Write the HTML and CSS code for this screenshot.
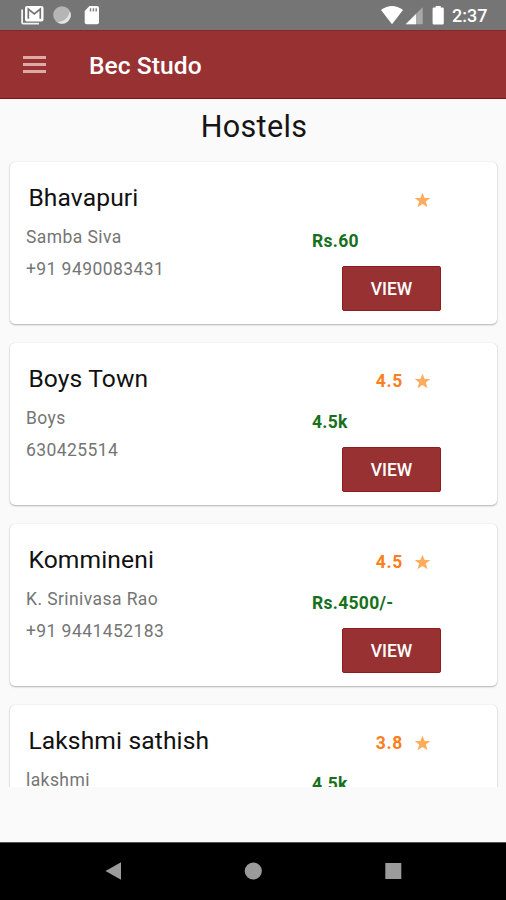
FILE: index.html
```html
<!DOCTYPE html>
<html lang="en">
<head>
<meta charset="utf-8">
<title>Bec Studo</title>
<link rel="stylesheet" href="styles.css">
</head>
<body>
<div class="screen">
  <div class="status">
    <svg class="status-left" width="100" height="30" viewBox="0 0 100 30">
      <path d="M21.2 9.5H23V22.7H39V24.6H23.2Q21.2 24.6 21.2 22.6Z" fill="#f2f2f2"/>
      <rect x="25" y="6" width="18.5" height="15.5" rx="2" fill="#fff"/>
      <path d="M28.3 18.8V9L34.3 13.8L40.3 9V18.8" fill="none" stroke="#747474" stroke-width="1.7"/>
      <circle cx="62" cy="15" r="8.8" fill="#b5b5b5"/>
      <path d="M70 11.5A8.6 8.6 0 0 1 57.5 22.2Q67 22 70 11.5Z" fill="#e4e4e4"/>
      <path d="M89.5 6H97Q99 6 99 8V22.3Q99 24.3 97 24.3H86.7Q84.7 24.3 84.7 22.3V11Z" fill="#fff"/>
      <path d="M90.5 8.2V11.4M93.4 8.2V11.4M96.2 8.2V11.4" stroke="#858585" stroke-width="1.5"/>
    </svg>
    <svg class="status-right" width="70" height="30" viewBox="380 0 70 30">
      <path d="M381 10Q392 1.8 403 10L392 24.2Z" fill="#fff"/>
      <path d="M422.7 7.3V24.3H405.7Z" fill="#a9a9a9"/>
      <path d="M416 14V24.3H405.7Z" fill="#fff"/>
      <path d="M435.7 6H440.7V7.5H442.6Q443.8 7.5 443.8 8.7V23.2Q443.8 24.4 442.6 24.4H433.8Q432.6 24.4 432.6 23.2V8.7Q432.6 7.5 433.8 7.5H435.7Z" fill="#fff"/>
    </svg>
    <span class="clock">2:37</span>
  </div>
  <header class="appbar">
    <div class="menu"><i></i><i></i><i></i></div>
    <h1 class="brand">Bec Studo</h1>
  </header>
  <main class="content">
    <h2 class="heading">Hostels</h2>
    <div class="list">
      <article class="card">
        <div class="info"><h3 class="name">Bhavapuri</h3><p class="line">Samba Siva</p><p class="line">+91 9490083431</p></div>
        <div class="side">
          <div class="rating"><span></span><svg class="star" viewBox="0 0 20 20"><path d="M10 0.8L12.5 7H19.2L13.9 11.2L15.9 18L10 14L4.1 18L6.1 11.2L0.8 7H7.5Z"/></svg></div>
          <div class="price">Rs.60</div><button class="view">VIEW</button>
        </div>
      </article>
      <article class="card">
        <div class="info"><h3 class="name">Boys Town</h3><p class="line">Boys</p><p class="line">630425514</p></div>
        <div class="side">
          <div class="rating"><span>4.5</span><svg class="star" viewBox="0 0 20 20"><path d="M10 0.8L12.5 7H19.2L13.9 11.2L15.9 18L10 14L4.1 18L6.1 11.2L0.8 7H7.5Z"/></svg></div>
          <div class="price">4.5k</div><button class="view">VIEW</button>
        </div>
      </article>
      <article class="card">
        <div class="info"><h3 class="name">Kommineni</h3><p class="line">K. Srinivasa Rao</p><p class="line">+91 9441452183</p></div>
        <div class="side">
          <div class="rating"><span>4.5</span><svg class="star" viewBox="0 0 20 20"><path d="M10 0.8L12.5 7H19.2L13.9 11.2L15.9 18L10 14L4.1 18L6.1 11.2L0.8 7H7.5Z"/></svg></div>
          <div class="price">Rs.4500/-</div><button class="view">VIEW</button>
        </div>
      </article>
      <article class="card">
        <div class="info"><h3 class="name">Lakshmi sathish</h3><p class="line">lakshmi</p></div>
        <div class="side">
          <div class="rating"><span>3.8</span><svg class="star" viewBox="0 0 20 20"><path d="M10 0.8L12.5 7H19.2L13.9 11.2L15.9 18L10 14L4.1 18L6.1 11.2L0.8 7H7.5Z"/></svg></div>
          <div class="price">4.5k</div>
        </div>
      </article>
    </div>
  </main>
  <nav class="navbar">
    <svg width="506" height="57" viewBox="0 843 506 57" fill="#9b9b9b">
      <path d="M105.5 871L121 862.3V879.7Z"/>
      <circle cx="253.3" cy="871" r="8.6"/>
      <rect x="385.3" y="863" width="16" height="16"/>
    </svg>
  </nav>
</div>
</body>
</html>
```

FILE: styles.css
```css
* { box-sizing: border-box; }
body, h1, h2, h3, p { margin: 0; }
body { font-family: Roboto, "Liberation Sans", sans-serif; background: #fafafa; }
svg { display: block; }
.screen { width: 506px; height: 900px; display: flex; flex-direction: column; overflow: hidden; background: #fafafa; }
.status { height: 30px; flex: none; display: flex; align-items: center; background: #757575; padding-right: 19px; }
.status-right { margin-left: auto; margin-right: 2px; }
.clock { color: #fff; font-size: 18px; font-weight: 500; line-height: 30px; width: 35px; white-space: nowrap; padding-top: 2px; }
.appbar { height: 69px; flex: none; display: flex; align-items: center; padding-left: 23px; background: #983132; border-bottom: 1px solid #840c12; border-top: 1px solid #8c2526; }
.menu { width: 23px; display: grid; gap: 4px; }
.menu i { height: 3px; background: #dfa9a8; }
.brand { margin: 2px 0 0 43px; color: #fff; font-size: 24.6px; font-weight: 500; line-height: 30px; letter-spacing: 0.05px; }
.content { height: 688px; flex: none; overflow: hidden; }
.heading { font-weight: 400; font-size: 30.5px; line-height: 36px; padding: 10px 0 0 2px; height: 63px; text-align: center; color: #151515; letter-spacing: 0.35px; }
.list { display: grid; gap: 19px; padding: 0 9px 0 10px; }
.card { height: 162px; display: flex; background: #fff; border-radius: 5px; box-shadow: 0 1px 2px rgba(0,0,0,.28), 0 0 1px rgba(0,0,0,.16); }
.info { width: 302px; padding: 20px 0 0 16px; }
.name { font-weight: 400; font-size: 24.6px; line-height: 32px; padding-left: 2.4px; margin-bottom: 7px; letter-spacing: 0.13px; color: #111; white-space: nowrap; }
.line { font-size: 17.5px; line-height: 32px; color: #757575; letter-spacing: 0.42px; }
.side { flex: 1; padding-top: 26px; }
.rating { display: flex; align-items: center; height: 24px; width: 119px; justify-content: flex-end; gap: 11px; color: #f97f20; font-size: 17.5px; font-weight: 700; letter-spacing: 0.7px; }
.star { width: 17px; height: 17px; fill: #ffad5c; }
.price { color: #16701c; font-size: 17.5px; font-weight: 700; line-height: 24px; margin-top: 17px; letter-spacing: 0.3px; }
.view { display: block; width: 99px; height: 45px; margin: 13px 0 0 30px; border: 1px solid #8c1c20; border-radius: 2px; background: #983132; color: #fff; font: 500 17.5px Roboto, "Liberation Sans", sans-serif; padding: 0; }
.navbar { height: 58px; flex: none; margin-top: auto; background: #000; border-top: 1px solid #555; }
```
